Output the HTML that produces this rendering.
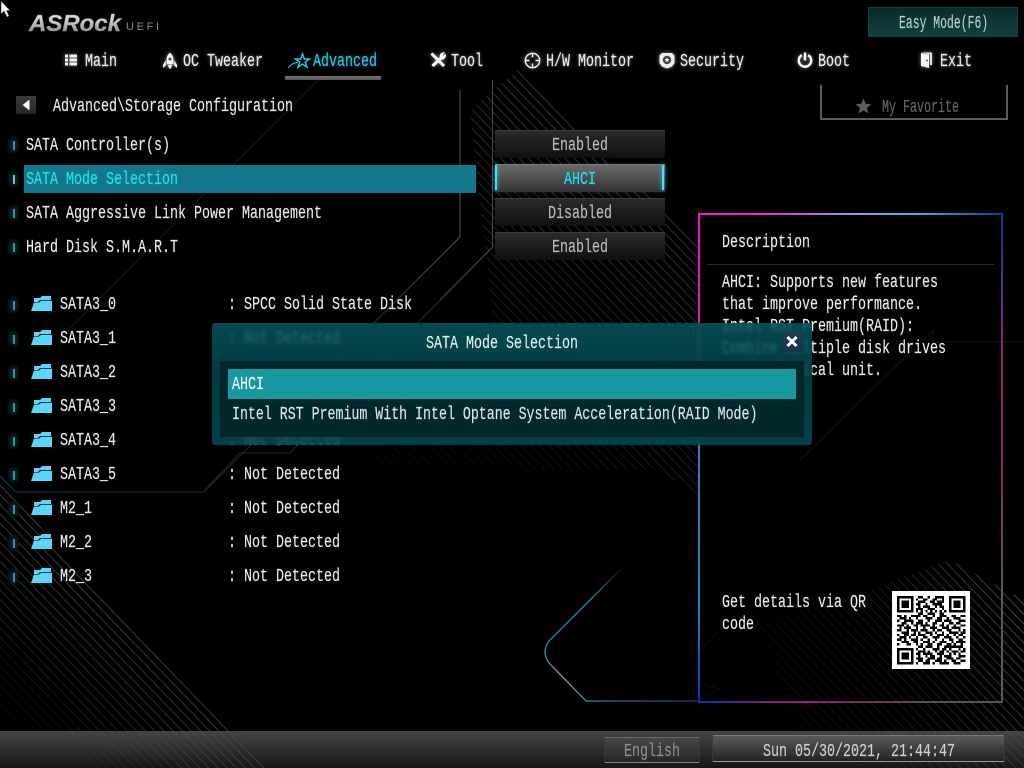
<!DOCTYPE html>
<html><head><meta charset="utf-8"><title>UEFI</title>
<style>
html,body{margin:0;padding:0;background:#000;width:1024px;height:768px;overflow:hidden}
#r{position:relative;width:1024px;height:768px;overflow:hidden;background:#000}
.a{position:absolute}
.t{position:absolute;font-family:"Liberation Mono",monospace;font-size:18px;line-height:20px;height:20px;margin-top:2px;transform:scaleX(.7407);transform-origin:0 50%;white-space:pre;color:#ececec;-webkit-text-stroke:.15px currentColor}
.n{text-shadow:0 0 4px rgba(255,255,255,.5)}
.v{left:228px}
.ind{position:absolute;left:8px;width:11px;height:16px;margin-top:1px;background:radial-gradient(ellipse at center,#0b3138 0%,#051519 60%,rgba(0,0,0,0) 100%)}
.ind i{position:absolute;left:5px;top:4px;width:2px;height:9px;background:#3f8f9f}
.btn{position:absolute;left:495px;width:170px;height:28px;box-sizing:border-box;border-top:1px solid #3c3c3c;background:linear-gradient(#2b2b2b,#101010)}
svg{position:absolute}
.g{filter:drop-shadow(0 0 2px rgba(255,255,255,.55))}
</style></head><body><div id="r">

<div class="a" style="left:0;top:731px;width:1024px;height:37px;background:linear-gradient(#454545,#3a3a3a 25%,#151515)"></div>

<svg style="left:0;top:0" width="1024" height="768" viewBox="0 0 1024 768">
<defs>
<pattern id="h" patternUnits="userSpaceOnUse" width="6.6" height="6.6" patternTransform="rotate(46)"><rect width="6.6" height="1" fill="#4c4c4c"/></pattern>
<linearGradient id="fa" gradientUnits="userSpaceOnUse" x1="170" y1="620" x2="50" y2="745"><stop offset="0" stop-color="#eee"/><stop offset="1" stop-color="#181818"/></linearGradient>
<linearGradient id="fb" gradientUnits="userSpaceOnUse" x1="640" y1="180" x2="430" y2="400"><stop offset="0" stop-color="#b0b0b0"/><stop offset=".6" stop-color="#555"/><stop offset="1" stop-color="#1c1c1c"/></linearGradient>
<linearGradient id="fc" gradientUnits="userSpaceOnUse" x1="1024" y1="620" x2="760" y2="720"><stop offset="0" stop-color="#e0e0e0"/><stop offset=".4" stop-color="#555"/><stop offset="1" stop-color="#0c0c0c"/></linearGradient>
<mask id="ma"><polygon points="0,478 85,580 232,731 265,768 0,768" fill="url(#fa)"/></mask>
<mask id="mb"><polygon points="470,110 520,68 700,248 700,500 660,470 360,470 493,320" fill="url(#fb)"/></mask>
<mask id="mc"><polygon points="870,590 950,560 1024,600 1024,768 800,768 700,690 700,640" fill="url(#fc)"/></mask>
<linearGradient id="l1" gradientUnits="userSpaceOnUse" x1="16" y1="492" x2="460" y2="237"><stop offset="0" stop-color="#123a55"/><stop offset=".35" stop-color="#3a1030"/><stop offset=".7" stop-color="#351a30"/><stop offset="1" stop-color="#555"/></linearGradient>
<linearGradient id="l2" gradientUnits="userSpaceOnUse" x1="590" y1="600" x2="698" y2="701"><stop offset="0" stop-color="#2a8aa5"/><stop offset=".2" stop-color="#999"/><stop offset=".55" stop-color="#1f7c98"/><stop offset="1" stop-color="#123a80"/></linearGradient>
<linearGradient id="l3" gradientUnits="userSpaceOnUse" x1="625" y1="565" x2="590" y2="600"><stop offset="0" stop-color="#000"/><stop offset="1" stop-color="#2a8aa5"/></linearGradient>
</defs>
<rect width="1024" height="768" fill="url(#h)" mask="url(#ma)"/>
<rect width="1024" height="768" fill="url(#h)" mask="url(#mb)"/>
<rect width="1024" height="768" fill="url(#h)" mask="url(#mc)"/>
<g fill="none" stroke-width="1">
<path d="M460 90V237L204 492H16L0 476" stroke="url(#l1)"/>
<path d="M492.500 247L290 453H240L205 490" stroke="#1e2a3c"/>
<path d="M492.500 80V247L440 300" stroke="#4a4a4a"/>
<path d="M320 78L66 332" stroke="#1c1424"/>
<path d="M625 565L590 600" stroke="url(#l3)" stroke-width="1.300"/>
<path d="M590 600L549 641Q541 652 549 663L586 701H698" stroke="url(#l2)" stroke-width="1.300"/>
<path d="M1024 342H933V330L800 460" stroke="#141414"/>
<path d="M700 650L720 630M700 684L719 689L700 701" stroke="#0d0d18"/>
</g>
</svg>

<!-- cursor -->
<svg style="left:0;top:0" width="12" height="19" viewBox="0 0 12 19"><path d="M1 1V14L4 11L7 17L9 16L6.500 10.500H10Z" fill="#fff" stroke="#333" stroke-width=".5"/></svg>

<!-- logo -->
<svg style="left:28px;top:12px" width="134" height="22" viewBox="0 0 134 22">
<defs><linearGradient id="lg" x1="0" y1="0" x2="0" y2="1"><stop offset="0" stop-color="#f2f2f2"/><stop offset=".55" stop-color="#bbb"/><stop offset="1" stop-color="#777"/></linearGradient></defs>
<text x="1" y="19" font-family="Liberation Sans" font-weight="bold" font-style="italic" font-size="23" textLength="92" lengthAdjust="spacingAndGlyphs" fill="url(#lg)" stroke="#999" stroke-width=".4">ASRock</text>
<text x="98" y="18" font-family="Liberation Sans" font-size="11" textLength="33" lengthAdjust="spacing" fill="#8a8a8a">UEFI</text>
</svg>

<!-- easy mode -->
<div class="a" style="left:868px;top:7px;width:150px;height:30px;box-sizing:border-box;border:1px solid #0c4446;background:linear-gradient(#0a2b2c,#10403f)"></div>
<div class="t" style="left:899px;top:12px;transform:scaleX(.635);color:#b9d2d0">Easy Mode(F6)</div>

<!-- nav icons -->
<svg class="g" style="left:64px;top:53px" width="14" height="14" viewBox="0 0 14 14" fill="#f2f2f2"><path d="M1 1.500h3v3H1zM5.500 1.500H13v3H5.500zM1 5.500h3v3H1zM5.500 5.500H13v3H5.500zM1 9.500h3v3H1zM5.500 9.500H13v3H5.500z"/></svg>
<svg class="g" style="left:162px;top:52px" width="16" height="17" viewBox="0 0 16 17" fill="#f6f6f6"><path d="M8 .5C5.500 3 4.500 5 4.500 8v4.500h7V8C11.500 5 10.500 3 8 .5zM3.800 8L1 13V16L3.800 13.500zM12.200 8L15 13V16L12.200 13.500zM6 13h4L9 16.500H7z"/><circle cx="8" cy="7" r="1.500" fill="#444"/></svg>
<svg style="left:287px;top:51px" width="24" height="20" viewBox="0 0 24 20" fill="none" stroke="#23c8e6" stroke-width="1.500"><path d="M15.500 3L17.300 8H22.500L18.300 11L20 16.200L15.500 13L11 16.200L12.700 11L8.500 8H13.700Z"/><path d="M1 17C4 13 7 11.500 11 11.500" stroke-width="1"/></svg>
<svg class="g" style="left:430px;top:52px" width="16" height="16" viewBox="0 0 16 16" fill="none" stroke="#fff"><path d="M1.500 1.500L14 14" stroke-width="3"/><path d="M12 5L2.500 14" stroke-width="3"/><path d="M10 4A3.500 3.500 0 0 1 14.500 .8L12.300 3L13.200 4.200L15.400 2.200A3.800 3.800 0 0 1 11 7.200Z" fill="#fff" stroke-width=".6"/></svg>
<svg class="g" style="left:524px;top:52px" width="17" height="17" viewBox="0 0 17 17" fill="none" stroke="#f6f6f6" stroke-width="1.400"><circle cx="8.500" cy="8.500" r="7.200"/><path d="M8.500 1V5.500M8.500 11.500V16M1 8.500H5.500M11.500 8.500H16"/></svg>
<svg class="g" style="left:659px;top:52px" width="16" height="17" viewBox="0 0 16 17"><path d="M3 1H13L15.500 3.500V11L13 14.500L8 16.500L3 14.500L.5 11V3.500Z" fill="#f0f0f0"/><circle cx="8" cy="8" r="4.200" fill="#444"/><path d="M8 5.300L8.800 7.100H10.700L9.200 8.300L9.700 10.300L8 9.100L6.300 10.300L6.800 8.300L5.300 7.100H7.200Z" fill="#f0f0f0"/></svg>
<svg class="g" style="left:797px;top:52px" width="16" height="16" viewBox="0 0 16 16" fill="none" stroke="#fff" stroke-width="2.400"><path d="M4.800 3.200A6.200 6.200 0 1 0 11.200 3.200"/><path d="M8 .5V8.500"/></svg>
<svg class="g" style="left:920px;top:51px" width="13" height="18" viewBox="0 0 13 18"><path d="M1 1.500H12V14H10V3.500L1 1.500Z" fill="#e2e2e2"/><path d="M1 2L9 3.500V17L1 15Z" fill="#f8f8f8"/><circle cx="7" cy="9.500" r=".9" fill="#444"/></svg>

<!-- nav text -->
<div class="t n" style="left:85px;top:50px">Main</div>
<div class="t n" style="left:183px;top:50px">OC Tweaker</div>
<div class="t n" style="left:313px;top:50px;color:#22c8e8;text-shadow:0 0 3px rgba(30,200,230,.4)">Advanced</div>
<div class="t n" style="left:451px;top:50px">Tool</div>
<div class="t n" style="left:546px;top:50px">H/W Monitor</div>
<div class="t n" style="left:680px;top:50px">Security</div>
<div class="t n" style="left:818px;top:50px">Boot</div>
<div class="t n" style="left:940px;top:50px">Exit</div>
<div class="a" style="left:285px;top:76px;width:96px;height:4px;background:linear-gradient(#777,#555)"></div>

<!-- breadcrumb -->
<div class="a" style="left:16px;top:96px;width:20px;height:18px;background:linear-gradient(#3c3c3c,#262626);border-radius:1px"></div>
<svg style="left:16px;top:96px" width="20" height="18" viewBox="0 0 20 18"><path d="M6.500 9L13.500 3.500V14.500Z" fill="#f4f4f4"/></svg>
<div class="t" style="left:53px;top:95px">Advanced\Storage Configuration</div>

<!-- favorite -->
<div class="a" style="left:820px;top:85px;width:188px;height:35px;box-sizing:border-box;border:2px solid #5c5c5c;border-top:0"></div>
<svg style="left:855px;top:98px" width="17" height="16" viewBox="0 0 17 16"><path d="M8.500 0.500L10.700 5.800L16.500 6.200L12 9.900L13.500 15.500L8.500 12.500L3.500 15.500L5 9.900L.5 6.200L6.300 5.800Z" fill="#5c5c5c"/></svg>
<div class="t" style="left:882px;top:96px;color:#666;transform:scaleX(.648)">My Favorite</div>

<!-- rows -->
<div class="a" style="left:24px;top:165px;width:452px;height:28px;background:#13788b"></div>
<div class="ind" style="top:136px"><i></i></div>
<div class="ind" style="top:170px"><i style="background:#8fb5bc"></i></div>
<div class="ind" style="top:204px"><i></i></div>
<div class="ind" style="top:238px"><i></i></div>
<div class="ind" style="top:296px"><i></i></div>
<div class="ind" style="top:330px"><i></i></div>
<div class="ind" style="top:364px"><i></i></div>
<div class="ind" style="top:398px"><i></i></div>
<div class="ind" style="top:432px"><i></i></div>
<div class="ind" style="top:466px"><i></i></div>
<div class="ind" style="top:500px"><i></i></div>
<div class="ind" style="top:534px"><i></i></div>
<div class="ind" style="top:568px"><i></i></div>
<div class="t" style="left:26px;top:134px">SATA Controller(s)</div>
<div class="t" style="left:26px;top:168px;color:#1ce6f6">SATA Mode Selection</div>
<div class="t" style="left:26px;top:202px">SATA Aggressive Link Power Management</div>
<div class="t" style="left:26px;top:236px">Hard Disk S.M.A.R.T</div>

<!-- option buttons -->
<div class="btn" style="top:130px"></div>
<div class="btn" style="top:164px;background:linear-gradient(#6a6a6a,#333);border-top-color:#777;box-shadow:0 0 3px rgba(40,200,230,.25)"></div>
<div class="a" style="left:495px;top:165px;width:2px;height:25px;background:#4fdcf5;box-shadow:0 0 5px #2cc8e8"></div>
<div class="a" style="left:662px;top:165px;width:2px;height:25px;background:#4fdcf5;box-shadow:0 0 5px #2cc8e8"></div>
<div class="btn" style="top:198px"></div>
<div class="btn" style="top:232px"></div>
<div class="t" style="left:552px;top:134px;color:#bcbcbc">Enabled</div>
<div class="t" style="left:564px;top:168px;color:#1ce6f6">AHCI</div>
<div class="t" style="left:548px;top:202px;color:#bcbcbc">Disabled</div>
<div class="t" style="left:552px;top:236px;color:#bcbcbc">Enabled</div>

<!-- folders + devices -->
<svg width="0" height="0" style="left:0;top:0"><defs><g id="fd"><path d="M3 3H9L11 1H20V5H9L7 7H3Z" fill="#5ad6fb"/><path d="M0 16L3 7.500H8L10 5.700H21V16H1Z" fill="#5ad6fb"/></g></defs></svg>
<svg style="left:31px;top:295px" width="22" height="17"><use href="#fd"/></svg>
<svg style="left:31px;top:329px" width="22" height="17"><use href="#fd"/></svg>
<svg style="left:31px;top:363px" width="22" height="17"><use href="#fd"/></svg>
<svg style="left:31px;top:397px" width="22" height="17"><use href="#fd"/></svg>
<svg style="left:31px;top:431px" width="22" height="17"><use href="#fd"/></svg>
<svg style="left:31px;top:465px" width="22" height="17"><use href="#fd"/></svg>
<svg style="left:31px;top:499px" width="22" height="17"><use href="#fd"/></svg>
<svg style="left:31px;top:533px" width="22" height="17"><use href="#fd"/></svg>
<svg style="left:31px;top:567px" width="22" height="17"><use href="#fd"/></svg>
<div class="t" style="left:60px;top:293px">SATA3_0</div><div class="t v" style="top:293px">: SPCC Solid State Disk</div>
<div class="t" style="left:60px;top:327px">SATA3_1</div><div class="t v" style="top:327px">: Not Detected</div>
<div class="t" style="left:60px;top:361px">SATA3_2</div><div class="t v" style="top:361px">: Not Detected</div>
<div class="t" style="left:60px;top:395px">SATA3_3</div><div class="t v" style="top:395px">: Not Detected</div>
<div class="t" style="left:60px;top:429px">SATA3_4</div><div class="t v" style="top:429px">: Not Detected</div>
<div class="t" style="left:60px;top:463px">SATA3_5</div><div class="t v" style="top:463px">: Not Detected</div>
<div class="t" style="left:60px;top:497px">M2_1</div><div class="t v" style="top:497px">: Not Detected</div>
<div class="t" style="left:60px;top:531px">M2_2</div><div class="t v" style="top:531px">: Not Detected</div>
<div class="t" style="left:60px;top:565px">M2_3</div><div class="t v" style="top:565px">: Not Detected</div>

<!-- description box -->
<div class="a" style="left:698px;top:213px;width:305px;height:2px;background:linear-gradient(90deg,#ff10d0 0%,#e830d0 25%,#9a9ad8 50%,#38b8d8 72%,#0c3c98 100%)"></div>
<div class="a" style="left:698px;top:213px;width:2px;height:490px;background:linear-gradient(#ff10d0 0%,#d020b0 25%,#5070c0 50%,#1c88c8 80%,#1030b0 100%)"></div>
<div class="a" style="left:1001px;top:213px;width:2px;height:490px;background:linear-gradient(#0c3c98 0%,#a02070 30%,#803060 50%,#585858 80%,#585858 100%)"></div>
<div class="a" style="left:698px;top:701px;width:305px;height:2px;background:linear-gradient(90deg,#1030b0 0%,#b01870 35%,#703050 55%,#555 75%,#555 100%)"></div>
<div class="a" style="left:707px;top:264px;width:287px;height:1px;background:#2c2c2c"></div>
<div class="t" style="left:722px;top:231px">Description</div>
<div class="t" style="left:722px;top:271px">AHCI: Supports new features</div>
<div class="t" style="left:722px;top:293px">that improve performance.</div>
<div class="t" style="left:722px;top:315px">Intel RST Premium(RAID):</div>
<div class="t" style="left:722px;top:337px">Combine multiple disk drives</div>
<div class="t" style="left:722px;top:359px">into a logical unit.</div>
<div class="t" style="left:722px;top:591px">Get details via QR</div>
<div class="t" style="left:722px;top:613px">code</div>

<!-- QR -->
<svg style="left:892px;top:591px" width="78" height="78" viewBox="0 0 78 78" shape-rendering="crispEdges">
<rect width="78" height="78" fill="#fff"/>
<g transform="translate(5 5) scale(2.36)" fill="none" stroke="#000" stroke-width="1">
<path d="M0 .5h7M0 6.500h7M.5 0v7M6.500 0v7M22 .5h7M22 6.500h7M22.500 0v7M28.500 0v7M0 22.500h7M0 28.500h7M.5 22v7M6.500 22v7"/>
<path d="M2 2.500h3M2 3.500h3M2 4.500h3M24 2.500h3M24 3.500h3M24 4.500h3M2 24.500h3M2 25.500h3M2 26.500h3"/>
<path d="M9 .5h2M13 .5h1M16 .5h4M8 1.500h1M11 1.500h2M15 1.500h2M19 1.500h1M9 2.500h3M14 2.500h2M17 2.500h3M8 3.500h2M12 3.500h1M15 3.500h4M9 4.500h1M11 4.500h3M16 4.500h1M18 4.500h2M8 5.500h3M13 5.500h3M19 5.500h1M8 6.500h1M10 6.500h1M12 6.500h1M14 6.500h1M16 6.500h1M18 6.500h1M20 6.500h1M9 7.500h2M13 7.500h3M18 7.500h2"/>
<path d="M0 8.500h2M3 8.500h1M6 8.500h4M11 8.500h2M15 8.500h1M18 8.500h3M23 8.500h2M27 8.500h2M1 9.500h3M5 9.500h1M8 9.500h1M12 9.500h3M17 9.500h2M21 9.500h1M24 9.500h3M0 10.500h1M3 10.500h4M9 10.500h2M13 10.500h1M16 10.500h3M20 10.500h3M26 10.500h3M2 11.500h2M6 11.500h1M8 11.500h3M12 11.500h1M15 11.500h2M19 11.500h1M22 11.500h2M25 11.500h2M0 12.500h3M4 12.500h1M7 12.500h2M10 12.500h4M15 12.500h1M18 12.500h2M21 12.500h1M24 12.500h1M27 12.500h2M1 13.500h1M3 13.500h3M8 13.500h1M11 13.500h1M14 13.500h3M19 13.500h3M23 13.500h4M0 14.500h2M4 14.500h1M6 14.500h3M10 14.500h3M15 14.500h1M17 14.500h2M21 14.500h2M26 14.500h1M28 14.500h1M2 15.500h3M7 15.500h1M9 15.500h1M12 15.500h3M16 15.500h1M19 15.500h1M22 15.500h4M27 15.500h2M0 16.500h1M3 16.500h2M6 16.500h2M9 16.500h3M14 16.500h1M17 16.500h3M21 16.500h1M24 16.500h1M26 16.500h2M1 17.500h3M5 17.500h1M8 17.500h1M11 17.500h2M15 17.500h3M20 17.500h3M25 17.500h1M28 17.500h1M0 18.500h2M3 18.500h1M6 18.500h3M10 18.500h1M13 18.500h1M16 18.500h1M19 18.500h1M22 18.500h2M26 18.500h2M2 19.500h3M7 19.500h2M11 19.500h3M15 19.500h1M18 19.500h3M23 19.500h1M25 19.500h4M0 20.500h1M4 20.500h2M8 20.500h1M10 20.500h1M13 20.500h2M17 20.500h2M21 20.500h2M24 20.500h1M27 20.500h1"/>
<path d="M9 21.500h2M12 21.500h3M17 21.500h1M20 21.500h8M8 22.500h1M11 22.500h1M15 22.500h3M19 22.500h2M22 22.500h1M26 22.500h1M28 22.500h1M9 23.500h3M13 23.500h1M16 23.500h1M18 23.500h2M21 23.500h1M23 23.500h3M27 23.500h2M8 24.500h2M11 24.500h4M17 24.500h3M22 24.500h1M24 24.500h1M26 24.500h1M9 25.500h1M12 25.500h1M14 25.500h2M18 25.500h1M20 25.500h3M26 25.500h3M8 26.500h3M13 26.500h3M17 26.500h2M21 26.500h3M25 26.500h2M9 27.500h2M12 27.500h2M16 27.500h3M20 27.500h1M23 27.500h2M27 27.500h2M8 28.500h1M11 28.500h3M15 28.500h1M18 28.500h4M24 28.500h3"/>
</g></svg>

<!-- footer -->
<div class="a" style="left:604px;top:737px;width:96px;height:26px;box-sizing:border-box;border:1px solid #3a3a3a;border-top-color:#6a6a6a;border-bottom-color:#888;border-radius:2px;background:linear-gradient(#484848,#262626)"></div>
<div class="t" style="left:624px;top:740px;color:#8e8e8e">English</div>
<div class="a" style="left:712px;top:735px;width:293px;height:27px;box-sizing:border-box;border:1px solid #3a3a3a;border-top-color:#777;border-bottom-color:#999;border-radius:2px;background:linear-gradient(#5a5a5a,#232323)"></div>
<div class="t" style="left:763px;top:740px;color:#d2d2d2">Sun 05/30/2021, 21:44:47</div>

<!-- popup -->
<div class="a" style="left:212px;top:323px;width:600px;height:122px;border-radius:3px;background:linear-gradient(rgba(6,86,94,.86),rgba(2,68,76,.86) 40%,rgba(2,72,80,.88));backdrop-filter:blur(1.5px)"></div>
<div class="a" style="left:220px;top:361px;width:584px;height:76px;background:#03282b"></div>
<div class="a" style="left:228px;top:369px;width:568px;height:30px;background:#17979f"></div>
<div class="t" style="left:426px;top:332px;color:#dff0ee">SATA Mode Selection</div>
<div class="t" style="left:232px;top:373px;color:#f2f8f8">AHCI</div>
<div class="t" style="left:232px;top:403px;color:#dfe8e6;transform:scaleX(.737)">Intel RST Premium With Intel Optane System Acceleration(RAID Mode)</div>
<div class="a" style="left:781px;top:331px;width:22px;height:21px;border-radius:3px;background:linear-gradient(#1d3f52,#17324a)"></div>
<svg style="left:781px;top:331px" width="22" height="21" viewBox="0 0 22 21"><path d="M6.500 6L15.500 15M15.500 6L6.500 15" stroke="#fff" stroke-width="3"/></svg>

</div></body></html>
